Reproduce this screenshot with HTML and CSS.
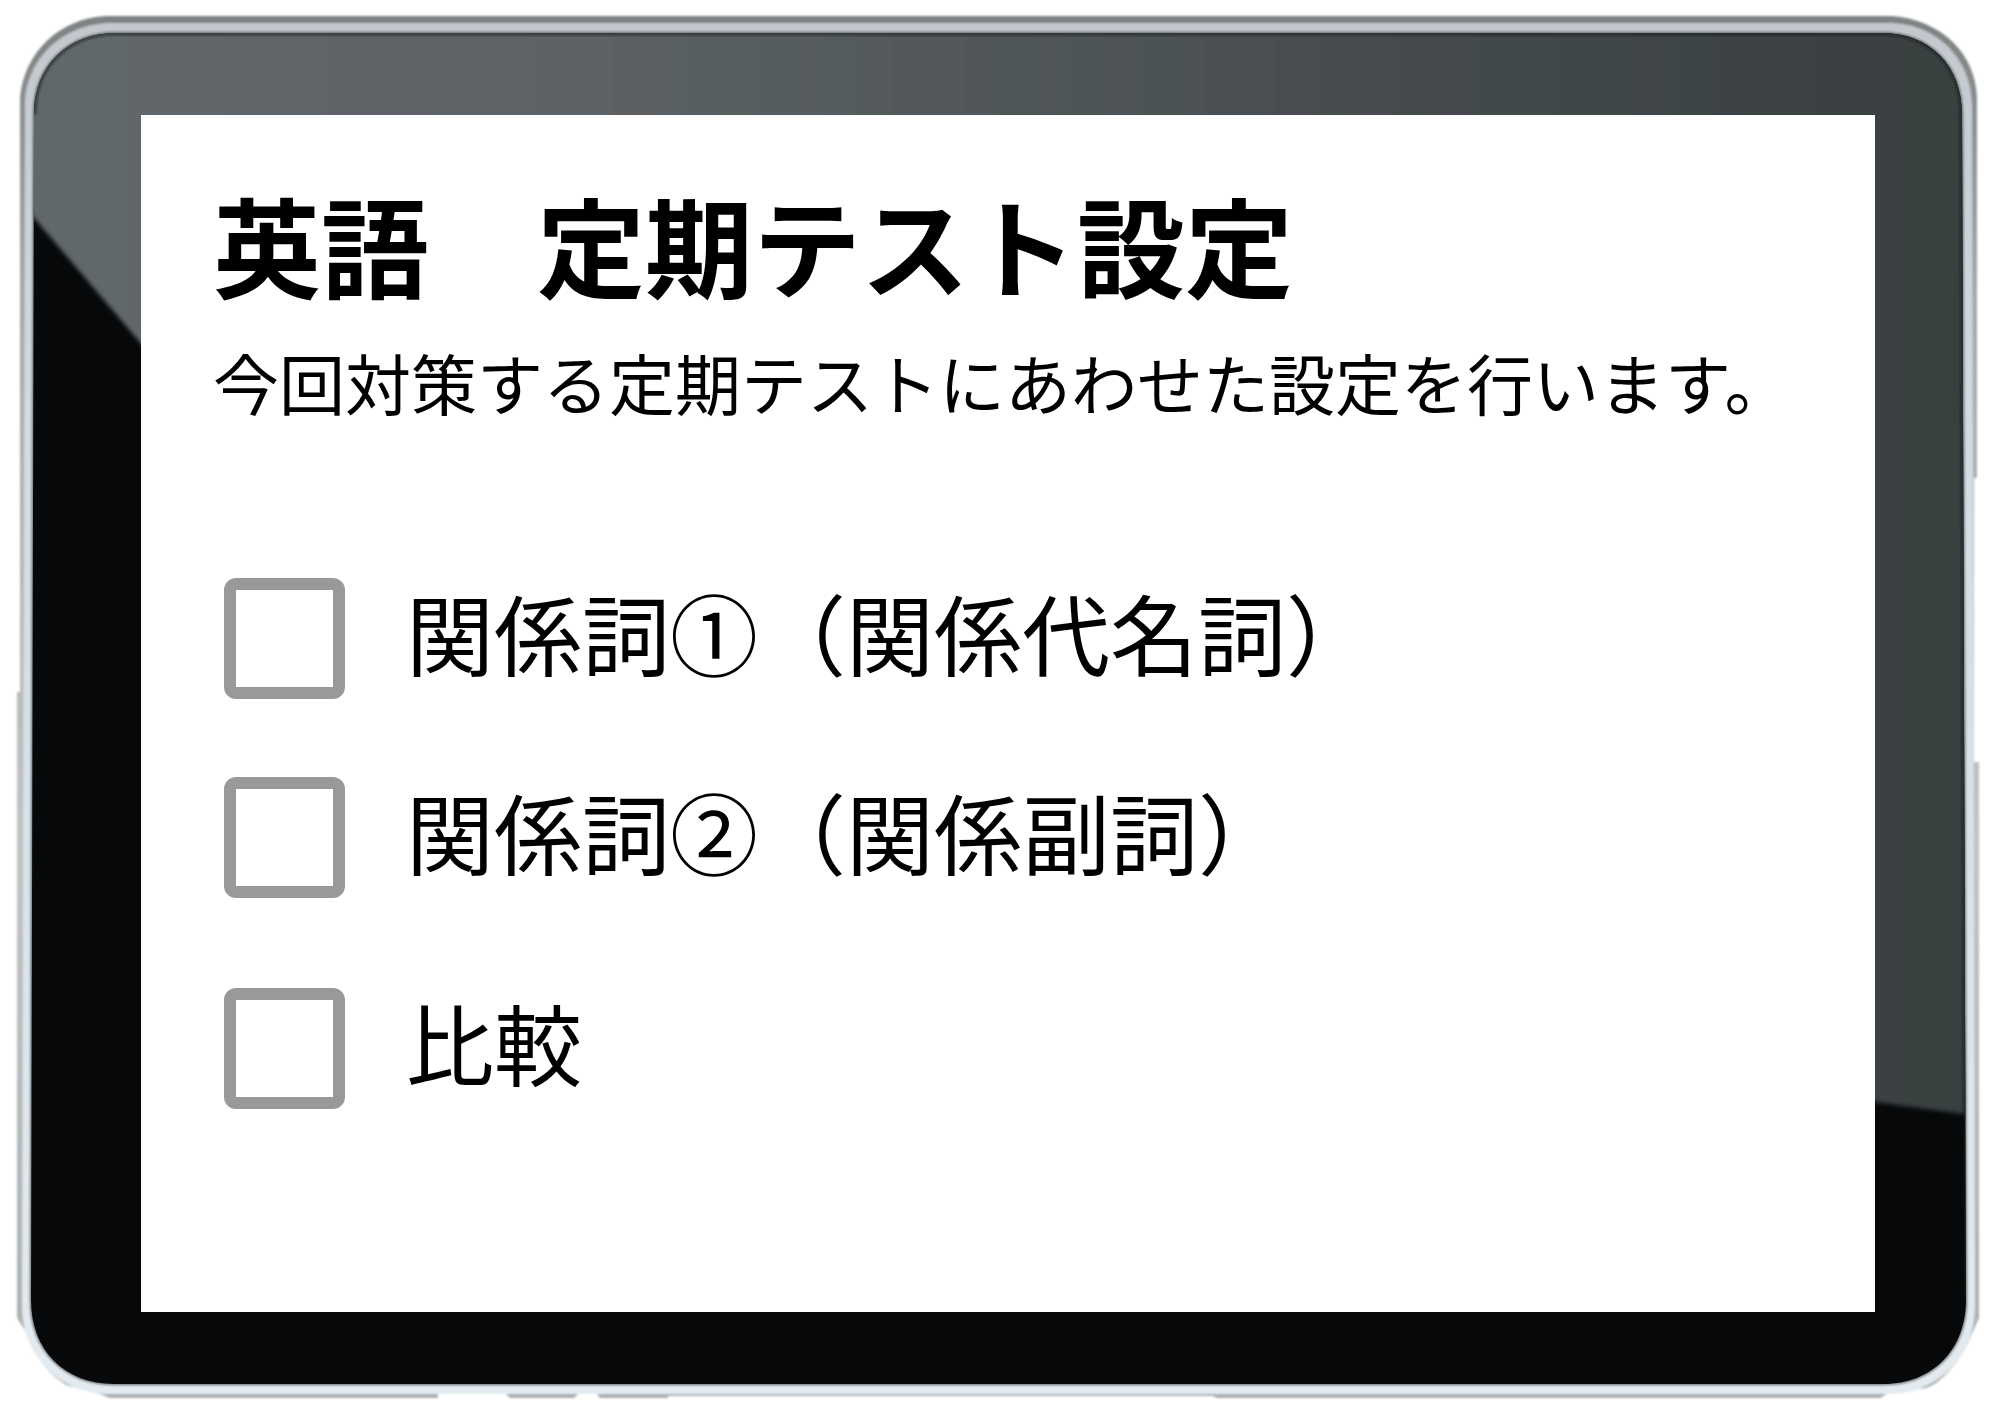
FILE: index.html
```html
<!DOCTYPE html>
<html lang="ja">
<head>
  <meta charset="UTF-8" />
  <meta name="viewport" content="width=device-width, initial-scale=1.0"/>
  <title>英語 定期テスト設定</title>
  <link rel="stylesheet" href="styles.css">
</head>
<body>

  <div class="tablet">
    <svg class="tablet-frame" viewBox="0 0 2000 1426" preserveAspectRatio="none" aria-hidden="true">
      <defs>
        <linearGradient id="edge" x1="0" y1="0" x2="0" y2="1">
          <stop offset="0" stop-color="#7f8282"/>
          <stop offset="0.2" stop-color="#a3a7a9"/>
          <stop offset="0.6" stop-color="#c0c4c6"/>
          <stop offset="1" stop-color="#a9adaf"/>
        </linearGradient>
        <linearGradient id="rim" x1="0" y1="0" x2="0" y2="1">
          <stop offset="0" stop-color="#c3c8ce"/>
          <stop offset="0.3" stop-color="#d3dbe3"/>
          <stop offset="1" stop-color="#e3ebf1"/>
        </linearGradient>
        <linearGradient id="shine" x1="0" y1="0" x2="1" y2="0">
          <stop offset="0" stop-color="#62686b"/>
          <stop offset="0.3" stop-color="#5c6265"/>
          <stop offset="0.65" stop-color="#484e51"/>
          <stop offset="0.85" stop-color="#3e4447"/>
          <stop offset="1" stop-color="#383e3f"/>
        </linearGradient>
        <clipPath id="glass">
          <path d="M116 33H1882C1930 33 1962 66 1962 114L1966 1300C1966 1350 1932 1384 1884 1384H114C64 1384 31 1350 31 1300L34 114C34 66 68 33 116 33Z"/>
        </clipPath>
        <filter id="soft"><feGaussianBlur stdDeviation="2"/></filter>
        <filter id="round"><feGaussianBlur stdDeviation="1"/></filter>
      </defs>

      <!-- metal body with the side buttons -->
      <g filter="url(#round)">
        <path fill="url(#edge)" d="M106 16H1892C1942 20 1976 54 1977 98V478H1974V762H1979V1318L1970 1338C1960 1362 1940 1384 1926 1388L1890 1392L1880 1398H1217L1213 1396H668V1398H600L597 1394H578L574 1398H510L506 1394H438V1398H110L100 1394L66 1385C50 1374 38 1362 34 1344L17 1318V692H20V98C24 52 60 18 106 16Z"/>
        <path fill="url(#rim)" d="M112 23H1888C1938 23 1972 60 1972 106L1975 1306C1975 1356 1938 1394 1888 1394H110C60 1394 22 1356 22 1306L25 106C25 60 62 23 112 23Z"/>
        <path fill="none" stroke="#6e7375" stroke-width="3" d="M116 33H1882C1930 33 1962 66 1962 114L1966 1300C1966 1350 1932 1384 1884 1384H114C64 1384 31 1350 31 1300L34 114C34 66 68 33 116 33Z"/>
      </g>

      <!-- glass and its reflection -->
      <g clip-path="url(#glass)">
        <path fill="#060809" d="M20 20H1980V1400H20Z"/>
        <path fill="url(#shine)" filter="url(#soft)" d="M0 0H2000V1119L1875 1102L300 530L0 178Z"/>
        <path fill="none" stroke="#101314" stroke-opacity="0.5" stroke-width="5" filter="url(#round)" d="M34 114C34 66 68 33 116 33H1882C1930 33 1962 66 1962 114L1966 1300"/>
      </g>
    </svg>

    <main class="screen">
      <h1>英語　定期テスト設定</h1>
      <p class="lead">今回対策する定期テストにあわせた設定を行います。</p>

      <form class="units">
        <div class="unit-group">
          <label class="unit"><input type="checkbox" name="unit" value="1"> 関係詞①（関係代名詞）</label>
          <label class="unit"><input type="checkbox" name="unit" value="2"> 関係詞②（関係副詞）</label>
        </div>
        <div class="unit-group">
          <label class="unit"><input type="checkbox" name="unit" value="3"> 比較</label>
        </div>
      </form>
    </main>
  </div>

</body>
</html>
```

FILE: styles.css
```css
* {
  box-sizing: border-box;
}

body {
  margin: 0;
  background: #fff;
  color: #000;
  font-family: "Noto Sans CJK JP", sans-serif;
}

.tablet {
  position: relative;
  display: flex;
  min-height: 100vh;
  padding: 115px 125px 114px 141px;
}

.tablet-frame {
  position: absolute;
  top: 0;
  left: 0;
  width: 100%;
  height: 100%;
}

.screen {
  position: relative;
  flex: 1;
  padding: 64px 72px 80px;
  background: #fff;
}

h1 {
  margin: 0;
  font-size: 108px;
  font-weight: bold;
  line-height: 128px;
}

.lead {
  margin: 26px 0 0;
  font-size: 66px;
  line-height: 96px;
}

.units {
  display: flex;
  flex-direction: column;
  gap: 90px;
  margin-top: 149px;
  padding-left: 11px;
}

.unit-group {
  display: flex;
  flex-direction: column;
  gap: 78px;
}

.unit {
  display: flex;
  align-items: flex-start;
  gap: 61px;
  font-size: 88px;
  line-height: 106px;
  cursor: pointer;
}

.unit input {
  appearance: none;
  flex: none;
  width: 121px;
  height: 121px;
  margin: 0;
  border: 12px solid #999;
  border-radius: 12px;
  background: #fff;
  cursor: pointer;
}

.unit input:checked {
  background: #999;
  box-shadow: inset 0 0 0 12px #fff;
}
```
